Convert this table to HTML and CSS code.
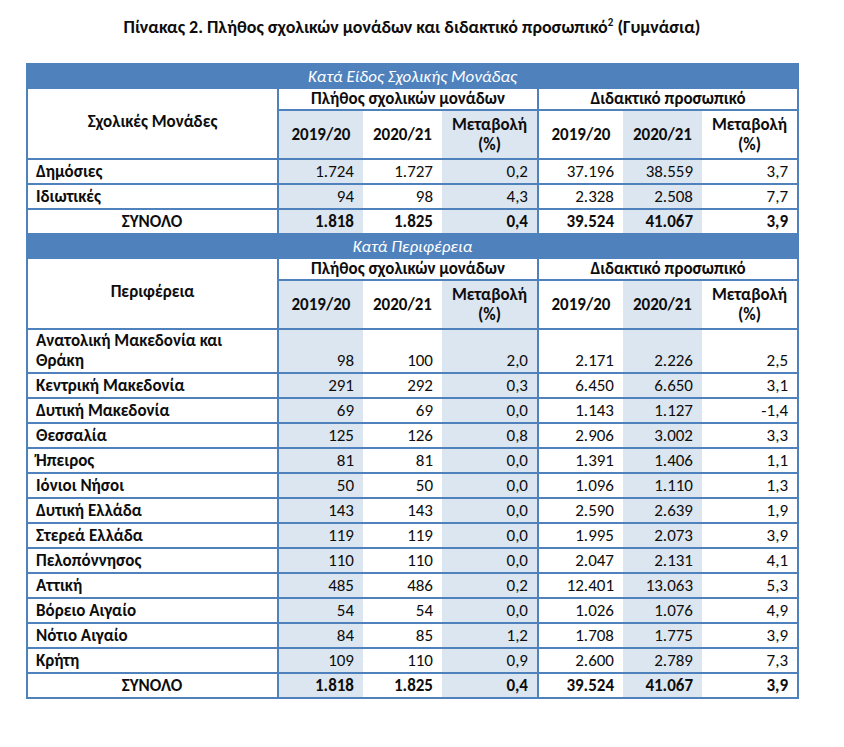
FILE: index.html
```html
<!DOCTYPE html>
<html lang="el">

<head>
  <meta charset="UTF-8">
  <meta name="viewport" content="width=device-width, initial-scale=1.0">
  <title>Πίνακας 2</title>
  <link rel="stylesheet" href="styles.css">
</head>

<body>
  <div class="page">
    <h1 class="title">Πίνακας 2. Πλήθος σχολικών μονάδων και διδακτικό προσωπικό<sup>2</sup> (Γυμνάσια)</h1>

    <table class="stats">
      <colgroup>
        <col class="c-name">
        <col class="c-y1">
        <col class="c-y2">
        <col class="c-ch">
        <col class="c-y1">
        <col class="c-y2">
        <col class="c-ch">
      </colgroup>
      <tbody>
        <tr class="band">
          <td colspan="7">Κατά Είδος Σχολικής Μονάδας</td>
        </tr>
        <tr class="group">
          <th rowspan="2" class="name-head">Σχολικές Μονάδες</th>
          <th colspan="3" class="split">Πλήθος σχολικών μονάδων</th>
          <th colspan="3">Διδακτικό προσωπικό</th>
        </tr>
        <tr class="years">
          <th class="sh">2019/20</th>
          <th>2020/21</th>
          <th class="sh split">Μεταβολή<br>(%)</th>
          <th>2019/20</th>
          <th class="sh">2020/21</th>
          <th>Μεταβολή<br>(%)</th>
        </tr>
        <tr class="row">
          <td>Δημόσιες</td><td>1.724</td><td>1.727</td><td>0,2</td><td>37.196</td><td>38.559</td><td>3,7</td>
        </tr>
        <tr class="row">
          <td>Ιδιωτικές</td><td>94</td><td>98</td><td>4,3</td><td>2.328</td><td>2.508</td><td>7,7</td>
        </tr>
        <tr class="row total">
          <td>ΣΥΝΟΛΟ</td><td>1.818</td><td>1.825</td><td>0,4</td><td>39.524</td><td>41.067</td><td>3,9</td>
        </tr>

        <tr class="band">
          <td colspan="7">Κατά Περιφέρεια</td>
        </tr>
        <tr class="group">
          <th rowspan="2" class="name-head">Περιφέρεια</th>
          <th colspan="3" class="split">Πλήθος σχολικών μονάδων</th>
          <th colspan="3">Διδακτικό προσωπικό</th>
        </tr>
        <tr class="years">
          <th class="sh">2019/20</th>
          <th>2020/21</th>
          <th class="sh split">Μεταβολή<br>(%)</th>
          <th>2019/20</th>
          <th class="sh">2020/21</th>
          <th>Μεταβολή<br>(%)</th>
        </tr>
        <tr class="row tall">
          <td>Ανατολική Μακεδονία και<br>Θράκη</td><td>98</td><td>100</td><td>2,0</td><td>2.171</td><td>2.226</td><td>2,5</td>
        </tr>
        <tr class="row">
          <td>Κεντρική Μακεδονία</td><td>291</td><td>292</td><td>0,3</td><td>6.450</td><td>6.650</td><td>3,1</td>
        </tr>
        <tr class="row">
          <td>Δυτική Μακεδονία</td><td>69</td><td>69</td><td>0,0</td><td>1.143</td><td>1.127</td><td>-1,4</td>
        </tr>
        <tr class="row">
          <td>Θεσσαλία</td><td>125</td><td>126</td><td>0,8</td><td>2.906</td><td>3.002</td><td>3,3</td>
        </tr>
        <tr class="row">
          <td>Ήπειρος</td><td>81</td><td>81</td><td>0,0</td><td>1.391</td><td>1.406</td><td>1,1</td>
        </tr>
        <tr class="row">
          <td>Ιόνιοι Νήσοι</td><td>50</td><td>50</td><td>0,0</td><td>1.096</td><td>1.110</td><td>1,3</td>
        </tr>
        <tr class="row">
          <td>Δυτική Ελλάδα</td><td>143</td><td>143</td><td>0,0</td><td>2.590</td><td>2.639</td><td>1,9</td>
        </tr>
        <tr class="row">
          <td>Στερεά Ελλάδα</td><td>119</td><td>119</td><td>0,0</td><td>1.995</td><td>2.073</td><td>3,9</td>
        </tr>
        <tr class="row">
          <td>Πελοπόννησος</td><td>110</td><td>110</td><td>0,0</td><td>2.047</td><td>2.131</td><td>4,1</td>
        </tr>
        <tr class="row">
          <td>Αττική</td><td>485</td><td>486</td><td>0,2</td><td>12.401</td><td>13.063</td><td>5,3</td>
        </tr>
        <tr class="row">
          <td>Βόρειο Αιγαίο</td><td>54</td><td>54</td><td>0,0</td><td>1.026</td><td>1.076</td><td>4,9</td>
        </tr>
        <tr class="row">
          <td>Νότιο Αιγαίο</td><td>84</td><td>85</td><td>1,2</td><td>1.708</td><td>1.775</td><td>3,9</td>
        </tr>
        <tr class="row">
          <td>Κρήτη</td><td>109</td><td>110</td><td>0,9</td><td>2.600</td><td>2.789</td><td>7,3</td>
        </tr>
        <tr class="row total">
          <td>ΣΥΝΟΛΟ</td><td>1.818</td><td>1.825</td><td>0,4</td><td>39.524</td><td>41.067</td><td>3,9</td>
        </tr>
      </tbody>
    </table>
  </div>
</body>

</html>
```

FILE: styles.css
```css
body {
  margin: 0;
  background-color: #fff;
  color: #0d0d0d;
  font-family: Carlito, Lato, "Liberation Sans", sans-serif;
}

.page {
  width: 772px;
  margin-left: 26px;
  padding-top: 16px;
}

.title {
  margin: 0 0 25px;
  font-size: 18px;
  line-height: 22px;
  font-weight: bold;
  text-align: center;
}

.title sup {
  font-size: 11px;
  line-height: 0;
}

.stats {
  width: 772px;
  border-collapse: collapse;
  table-layout: fixed;
  font-size: 17px;
  line-height: 20px;
  border: 2px solid #4f81bd;
}

.c-name {
  width: 251px;
}

.c-y1 {
  width: 85px;
}

.c-y2 {
  width: 79px;
}

.c-ch {
  width: 96px;
}

.stats th,
.stats td {
  padding: 0 9px 0 9px;
}

.band td {
  height: 24px;
  background-color: #4f81bd;
  color: #fff;
  font-style: italic;
  text-align: center;
  vertical-align: middle;
  padding: 0;
}

.group th {
  height: 20px;
  border-bottom: 2px solid #4f81bd;
  text-align: center;
  vertical-align: middle;
}

.group .name-head {
  border-right: 2px solid #4f81bd;
  border-bottom: 2px solid #4f81bd;
  padding-bottom: 4px;
}

.split {
  border-right: 2px solid #4f81bd;
}

.years th {
  height: 47px;
  text-align: center;
  vertical-align: middle;
  border-bottom: 2px solid #4f81bd;
  padding: 0 4px;
}

.sh {
  background-color: #dce6f1;
}

.row td {
  height: 22px;
  text-align: right;
  vertical-align: bottom;
  border-bottom: 2px solid #4f81bd;
  padding-bottom: 1px;
}

.row.tall td {
  padding-top: 1px;
}

.row td:nth-child(1) {
  text-align: left;
  font-weight: bold;
  border-right: 2px solid #4f81bd;
  padding-left: 8px;
}

.row td:nth-child(4) {
  border-right: 2px solid #4f81bd;
}

.row td:nth-child(2),
.row td:nth-child(4),
.row td:nth-child(6) {
  background-color: #dce6f1;
}

.total td {
  font-weight: bold;
}

.total td:nth-child(1) {
  text-align: center;
}
```
